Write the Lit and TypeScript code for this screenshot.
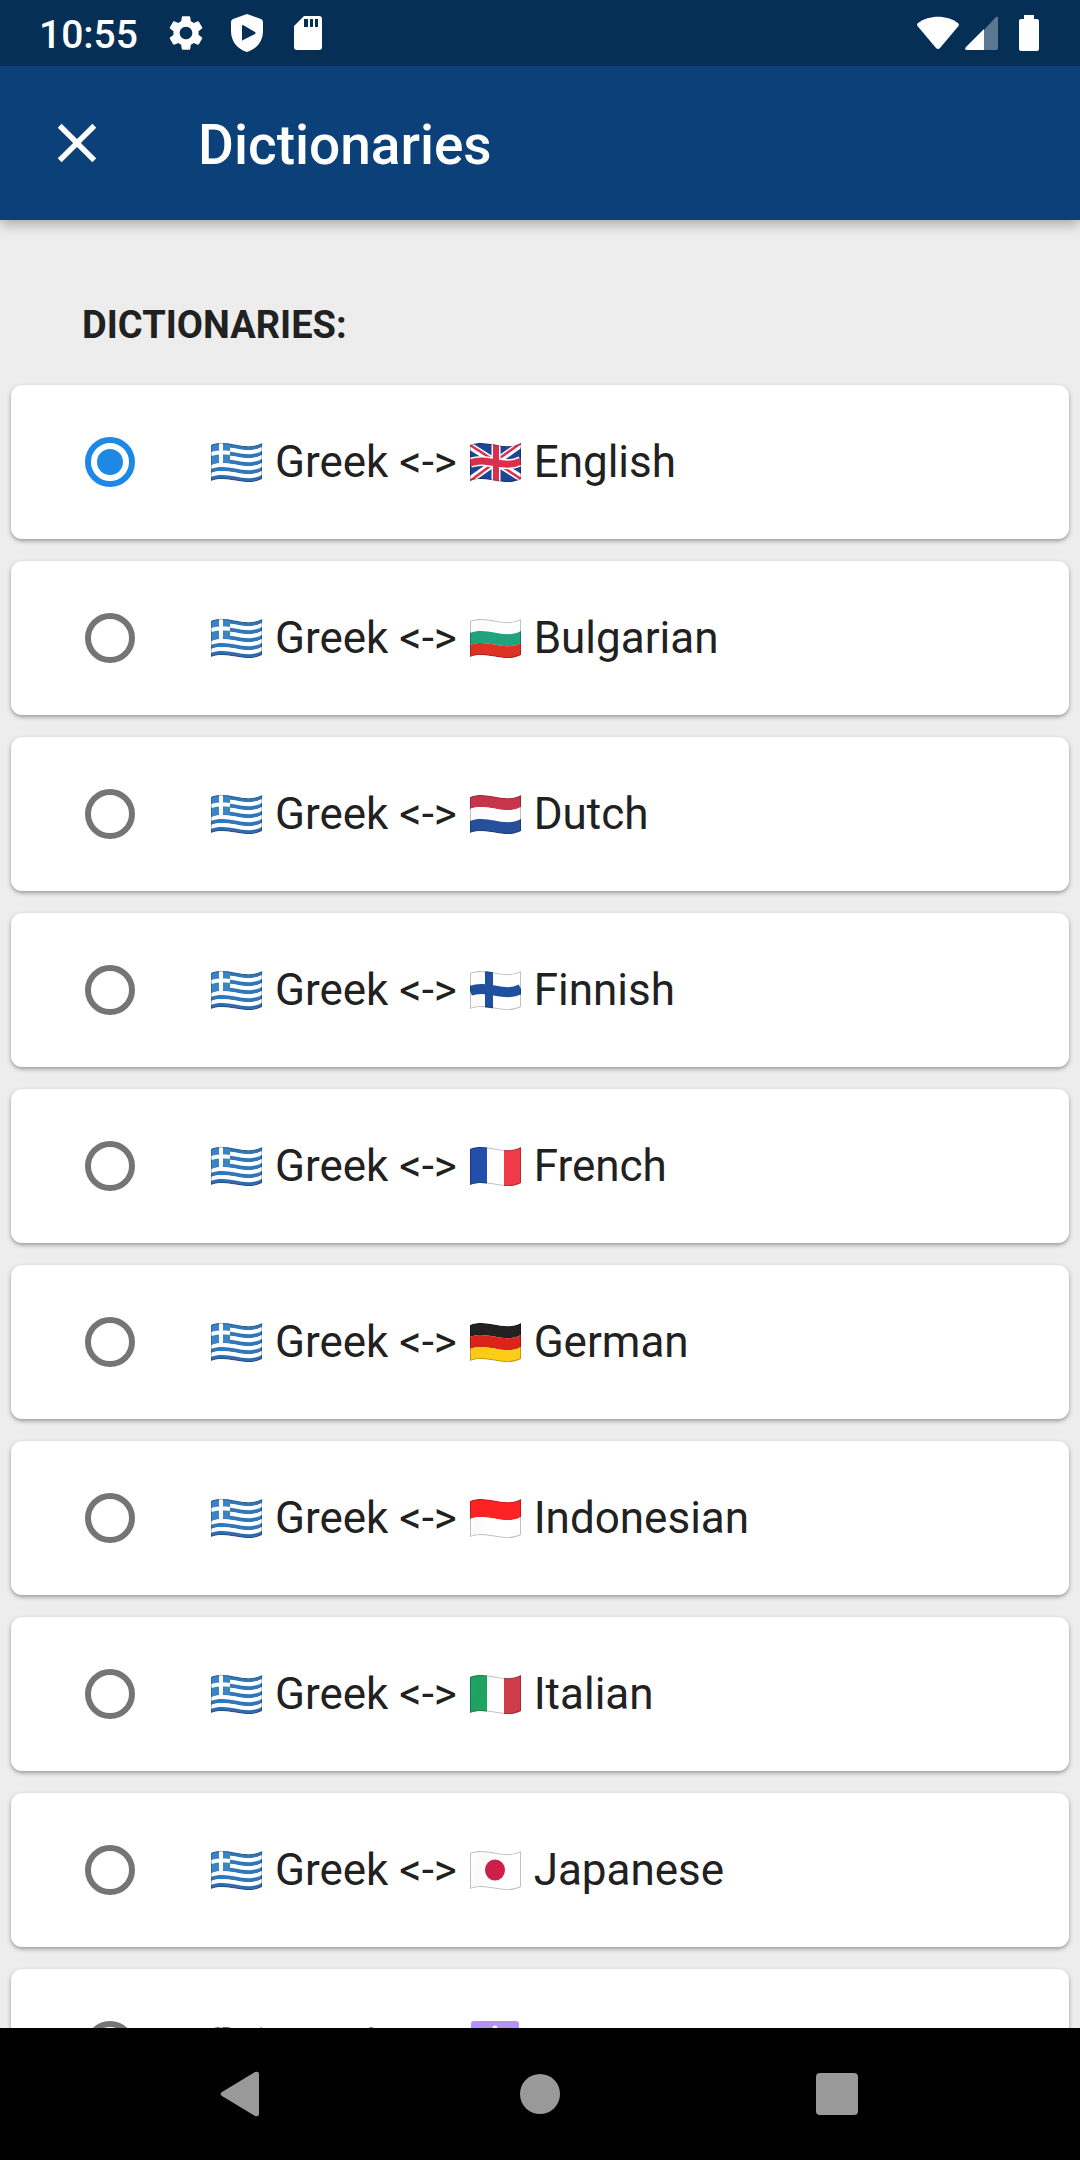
import { LitElement, html, css, svg, type TemplateResult } from "lit";
import { customElement, property, state } from "lit/decorators.js";

/** Closed outline of a waving horizontal band between two heights. */
const band = (top: number, bottom: number) =>
  `M0 ${top + 2}C17 ${top - 5} 34 ${top + 9} 51 ${top}V${bottom}C34 ${bottom + 9} 17 ${bottom - 5} 0 ${bottom + 2}Z`;

/** Open waving line that runs across the flag. */
const wave = (y: number) => `M0 ${y + 2}C17 ${y - 5} 34 ${y + 9} 51 ${y}`;

const rows = (...colors: string[]) =>
  colors.map((c, i) => {
    const h = 36 / colors.length;
    return svg`<path fill=${c} d=${band(i * h, (i + 1) * h)} />`;
  });

const columns = (...colors: string[]) =>
  colors.map((c, i) => svg`<rect fill=${c} x=${i * 17} y="-2" width="17" height="42" />`);

const flags: Record<string, () => unknown> = {
  gr: () => svg`
    ${rows("#2f78bd", "#fff", "#2f78bd", "#fff", "#2f78bd", "#fff", "#2f78bd", "#fff", "#2f6cb0")}
    <path fill="#3a86c8" d="M0 0H19V20.5C13 18 6 20 0 22Z" />
    <path fill="none" stroke="#fff" stroke-width="4" d="M10 -2V20M0 11C6 9 13 9 19 10" />`,
  gb: () => svg`
    <path fill="#1f4596" d=${band(0, 36)} />
    <path stroke="#fff" stroke-width="7" d="M0 3L51 35M51 1L0 37" />
    <path stroke="#dc2f4e" stroke-width="2.500" d="M0 2L25 18M51 36L25 19M51 0L27 17M0 38L24 20" />
    <path stroke="#fff" stroke-width="9" d="M26 -2V40" />
    <path fill="none" stroke="#fff" stroke-width="10" d=${wave(18)} />
    <path stroke="#dc2f4e" stroke-width="6" d="M26 -2V40" />
    <path fill="none" stroke="#dc2f4e" stroke-width="7" d=${wave(18)} />`,
  bg: () => rows("#fff", "#20a480", "#dd3324"),
  nl: () => rows("#c8354a", "#fff", "#27509c"),
  fi: () => svg`
    <path fill="#fff" d=${band(0, 36)} />
    <path stroke="#1f509f" stroke-width="8" d="M19 -2V40" />
    <path fill="none" stroke="#1f509f" stroke-width="10" d=${wave(18)} />`,
  fr: () => columns("#2350ad", "#fff", "#f03c49"),
  de: () => rows("#222", "#dc2319", "#ffcc17"),
  id: () => rows("#ff2222", "#fff"),
  it: () => columns("#1fa564", "#fff", "#cf3d4b"),
  jp: () => svg`
    <path fill="#fff" d=${band(0, 36)} />
    <ellipse fill="#cc1f49" cx="25" cy="19" rx="10" ry="10.5" />`,
};

@customElement("flag-icon")
export class FlagIcon extends LitElement {
  @property() code = "gr";

  static styles = css`
    :host { display: inline; }
    .flag { width: 55px; height: 40px; vertical-align: -5px; }
    .symbol { width: 55px; height: 48px; vertical-align: -8px; }
  `;

  render() {
    if (this.code === "cross") {
      return html`<svg class="symbol" viewBox="0 0 55 48" aria-hidden="true">
        <rect x="3" y="0" width="48" height="48" rx="3" fill="#b592f5" />
        <path stroke="#fff" stroke-width="5" stroke-linecap="round" d="M27 7V41M16 18H38" />
      </svg>`;
    }
    return html`<svg class="flag" viewBox="-2 -1 55 40" aria-hidden="true">
      <defs>
        <clipPath id="cloth"><path d=${band(0, 36)} /></clipPath>
        <linearGradient id="fold" x1="0" x2="1" y1="0" y2="0.3">
          <stop offset="0" stop-color="#000" stop-opacity="0" />
          <stop offset="0.3" stop-color="#000" stop-opacity="0.02" />
          <stop offset="0.6" stop-color="#000" stop-opacity="0" />
        </linearGradient>
      </defs>
      <g clip-path="url(#cloth)">
        ${flags[this.code]()}
        <path fill="url(#fold)" stroke="#000" stroke-opacity="0.24" stroke-width="2" d=${band(0, 36)} />
      </g>
    </svg>`;
  }
}

interface Dictionary {
  code: string;
  name: string;
}

const dictionaries: Dictionary[] = [
  { code: "gb", name: "English" },
  { code: "bg", name: "Bulgarian" },
  { code: "nl", name: "Dutch" },
  { code: "fi", name: "Finnish" },
  { code: "fr", name: "French" },
  { code: "de", name: "German" },
  { code: "id", name: "Indonesian" },
  { code: "it", name: "Italian" },
  { code: "jp", name: "Japanese" },
  { code: "cross", name: "Latin" },
];

@customElement("app-root")
export class AppRoot extends LitElement {
  @state() private selected = "gb";

  static styles = css`
    :host {
      display: block;
      font-family: Roboto, "Noto Sans", sans-serif;
      color: #212121;
    }
    .screen {
      display: flex;
      flex-direction: column;
      height: 100vh;
      background: #ededed;
    }
    svg { display: block; }
    button {
      display: grid;
      place-items: center;
      border: 0;
      padding: 0;
      background: none;
      color: inherit;
    }
    .status {
      flex: none;
      display: flex;
      align-items: center;
      justify-content: space-between;
      height: 66px;
      padding: 0 41px 0 39px;
      background: #062f55;
      color: #fff;
      z-index: 2;
    }
    .group { display: flex; align-items: center; gap: 19px; }
    .signals { gap: 6px; }
    .battery { margin-left: 14px; }
    .time {
      padding: 4px 8px 0 0;
      font-size: 39px;
      font-weight: 500;
      line-height: 44px;
    }
    .bar {
      flex: none;
      display: flex;
      align-items: center;
      gap: 88px;
      height: 154px;
      padding: 0 44px;
      background: #0b4078;
      color: #fff;
      box-shadow: 0 4px 12px rgba(0, 0, 0, 0.3);
      z-index: 1;
    }
    .title {
      margin: 0;
      padding-top: 4px;
      font-size: 55px;
      font-weight: 500;
      line-height: 64px;
    }
    .content {
      flex: 1;
      min-height: 0;
      overflow-y: auto;
      scrollbar-width: none;
    }
    .heading {
      margin: 0;
      padding: 82px 82px 37px;
      font-size: 38px;
      font-weight: 700;
      line-height: 46px;
      text-transform: uppercase;
    }
    .list {
      display: flex;
      flex-direction: column;
      gap: 22px;
      padding: 0 11px 22px;
    }
    .card {
      display: flex;
      align-items: center;
      gap: 74px;
      padding: 51px 74px;
      border-radius: 11px;
      background: #fff;
      box-shadow: 0 2px 4px rgba(0, 0, 0, 0.36);
      font-size: 44px;
      line-height: 52px;
    }
    .radio {
      flex: none;
      appearance: none;
      display: grid;
      place-items: center;
      box-sizing: border-box;
      width: 50px;
      height: 50px;
      margin: 0;
      border: 6px solid #757575;
      border-radius: 50%;
    }
    .radio:checked { border-color: #1e88e5; }
    .radio:checked::before {
      content: "";
      width: 26px;
      height: 26px;
      border-radius: 50%;
      background: #1e88e5;
    }
    .nav {
      flex: none;
      display: grid;
      grid-template-columns: repeat(3, 1fr);
      height: 132px;
      padding: 0 94px;
      background: #000;
      color: #999;
      z-index: 1;
    }
  `;

  private card(d: Dictionary): TemplateResult {
    return html`<label class="card">
      <input
        class="radio"
        type="radio"
        name="dictionary"
        .checked=${this.selected === d.code}
        @change=${() => (this.selected = d.code)}
      />
      <span><flag-icon code="gr"></flag-icon> Greek &lt;-&gt; <flag-icon code=${d.code}></flag-icon> ${d.name}</span>
    </label>`;
  }

  render() {
    return html`<div class="screen">
      <div class="status">
        <div class="group">
          <span class="time">10:55</span>
          <svg width="42" height="42" viewBox="0 0 24 24" fill="currentColor" aria-hidden="true">
            <path d="M19.14 12.94c.04-.3.06-.61.06-.94 0-.32-.02-.64-.07-.94l2.03-1.58a.49.49 0 0 0 .12-.61l-1.92-3.32a.488.488 0 0 0-.59-.22l-2.39.96c-.5-.38-1.03-.7-1.62-.94l-.36-2.54a.484.484 0 0 0-.48-.41h-3.84c-.24 0-.43.17-.47.41l-.36 2.54c-.59.24-1.13.57-1.62.94l-2.39-.96c-.22-.08-.47 0-.59.22L2.74 8.87c-.12.21-.08.47.12.61l2.03 1.58c-.05.3-.09.63-.09.94s.02.64.07.94l-2.03 1.58a.49.49 0 0 0-.12.61l1.92 3.32c.12.22.37.29.59.22l2.39-.96c.5.38 1.03.7 1.62.94l.36 2.54c.05.24.24.41.48.41h3.84c.24 0 .44-.17.47-.41l.36-2.54c.59-.24 1.13-.56 1.62-.94l2.39.96c.22.08.47 0 .59-.22l1.92-3.32c.12-.22.07-.47-.12-.61l-2.01-1.58zM12 15.6c-1.98 0-3.6-1.62-3.6-3.6s1.62-3.6 3.6-3.6 3.6 1.62 3.6 3.6-1.62 3.6-3.6 3.6z" />
          </svg>
          <svg width="42" height="42" viewBox="0 0 42 42" fill="currentColor" aria-hidden="true">
            <path fill-rule="evenodd" d="M21 2L35 7Q37 8 37 10V19C37 29 31 37 21 40C11 37 5 29 5 19V10Q5 8 7 7ZM16 14V28Q16 29 17 28L29 22Q30 21 29 20L17 13Q16 13 16 14Z" />
          </svg>
          <svg width="42" height="42" viewBox="0 0 42 42" fill="currentColor" aria-hidden="true">
            <path fill-rule="evenodd" d="M17 4H32Q35 4 35 7V35Q35 38 32 38H10Q7 38 7 35V14ZM17 7V15H21V7ZM23 7V15H26V7ZM28 7V15H31V7Z" />
          </svg>
        </div>
        <div class="group signals">
          <svg width="42" height="34" viewBox="0 0 42 34" fill="currentColor" aria-hidden="true">
            <path d="M1 7C12 -1.500 30 -1.500 41 7Q42.500 8.500 41.500 10L23 32Q21 34 19 32L.5 10Q-.5 8.500 1 7Z" />
          </svg>
          <svg width="34" height="34" viewBox="0 0 34 34" fill="currentColor" aria-hidden="true">
            <path opacity="0.35" d="M19 14L31 1Q33 0 33 2V32Q33 34 31 34H19Z" />
            <path d="M19 13V34H2Q-1 34 1 31Z" />
          </svg>
          <svg class="battery" width="20" height="36" viewBox="0 0 20 36" fill="currentColor" aria-hidden="true">
            <path d="M5 0H15V4H18Q20 4 20 6V34Q20 36 18 36H2Q0 36 0 34V6Q0 4 2 4H5Z" />
          </svg>
        </div>
      </div>
      <header class="bar">
        <button aria-label="Close">
          <svg width="66" height="66" viewBox="0 0 24 24" fill="currentColor" aria-hidden="true">
            <path d="M19 6.410L17.590 5 12 10.590 6.410 5 5 6.410 10.590 12 5 17.590 6.410 19 12 13.410 17.590 19 19 17.590 13.410 12z" />
          </svg>
        </button>
        <h1 class="title">Dictionaries</h1>
      </header>
      <main class="content">
        <h2 class="heading" id="heading">Dictionaries:</h2>
        <div class="list" role="radiogroup" aria-labelledby="heading">
          ${dictionaries.map((d) => this.card(d))}
        </div>
      </main>
      <nav class="nav">
        <button aria-label="Back">
          <svg width="46" height="46" viewBox="0 0 46 46" fill="currentColor" aria-hidden="true">
            <path d="M2 21L35 1Q39 0 39 3V43Q39 46 35 45L2 25Q-1 23 2 21Z" />
          </svg>
        </button>
        <button aria-label="Home">
          <svg width="40" height="40" viewBox="0 0 40 40" fill="currentColor" aria-hidden="true">
            <circle cx="20" cy="20" r="20" />
          </svg>
        </button>
        <button aria-label="Overview">
          <svg width="42" height="42" viewBox="0 0 42 42" fill="currentColor" aria-hidden="true">
            <rect width="42" height="42" rx="4" />
          </svg>
        </button>
      </nav>
    </div>`;
  }
}
